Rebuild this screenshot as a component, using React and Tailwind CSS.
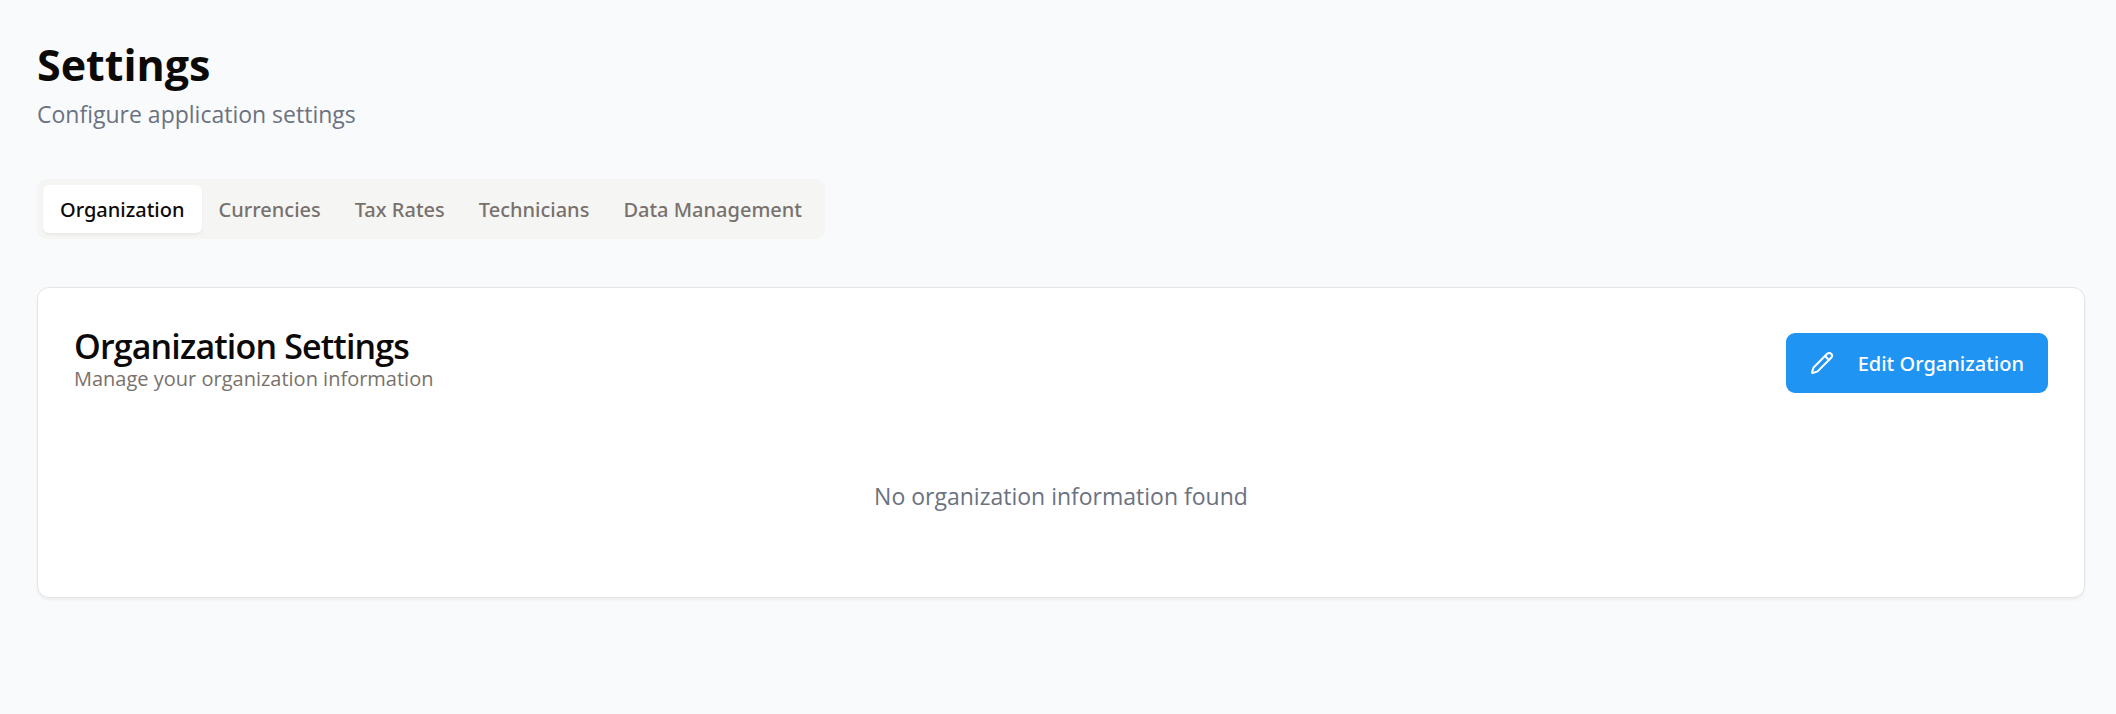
import React, { useState } from "react";
import { Pencil } from "lucide-react";

const tabs = ["Organization", "Currencies", "Tax Rates", "Technicians", "Data Management"];

export default function App() {
  const [active, setActive] = useState(tabs[0]);
  return (
    <main className="min-h-screen bg-[#f9fafc] pt-[35px] pr-[31px] pb-9 pl-[37px] font-['Open_Sans','Noto_Sans',sans-serif] text-[#0c0a09]">
      <header>
        <h1 className="text-[43px] leading-[60px] font-bold">Settings</h1>
        <p className="text-[23px] leading-[38px] text-[#6b7280]">Configure application settings</p>
      </header>

      <div role="tablist" className="mt-[46px] flex h-[60px] w-fit items-center rounded-[9px] bg-[#f5f5f4] p-1.5 font-['Noto_Sans',sans-serif] text-[#78716c]">
        {tabs.map((tab) => (
          <button
            key={tab}
            type="button"
            role="tab"
            aria-selected={active === tab}
            onClick={() => setActive(tab)}
            className="h-12 rounded-md px-[17px] pt-0.5 text-[20px] font-medium whitespace-nowrap aria-selected:bg-white aria-selected:text-[#0c0a09] aria-selected:shadow-[0_2px_3px_rgba(0,0,0,0.05)]"
          >
            {tab}
          </button>
        ))}
      </div>

      <section className="mt-12 rounded-xl border border-[#e7e5e4] bg-white px-9 pt-10 pb-9 shadow-[0_2px_3px_rgba(0,0,0,0.05)]">
        <div className="flex items-start justify-between">
          <div>
            <h2 className="text-[34px] leading-9 font-semibold tracking-tight">Organization Settings</h2>
            <p className="text-[20px] leading-[30px] text-[#78716c]">Manage your organization information</p>
          </div>
          <button type="button" className="mt-[5px] flex h-[60px] items-center gap-6 rounded-[9px] bg-[#2094f3] px-6 font-['Noto_Sans',sans-serif] text-[20px] font-medium text-white">
            <Pencil className="size-6 shrink-0" strokeWidth={2} aria-hidden="true" />
            <span className="pt-0.5">Edit Organization</span>
          </button>
        </div>
        <p className="pt-[84px] pb-[47px] text-center text-[23px] leading-9 text-[#6b7280]">No organization information found</p>
      </section>
    </main>
  );
}
